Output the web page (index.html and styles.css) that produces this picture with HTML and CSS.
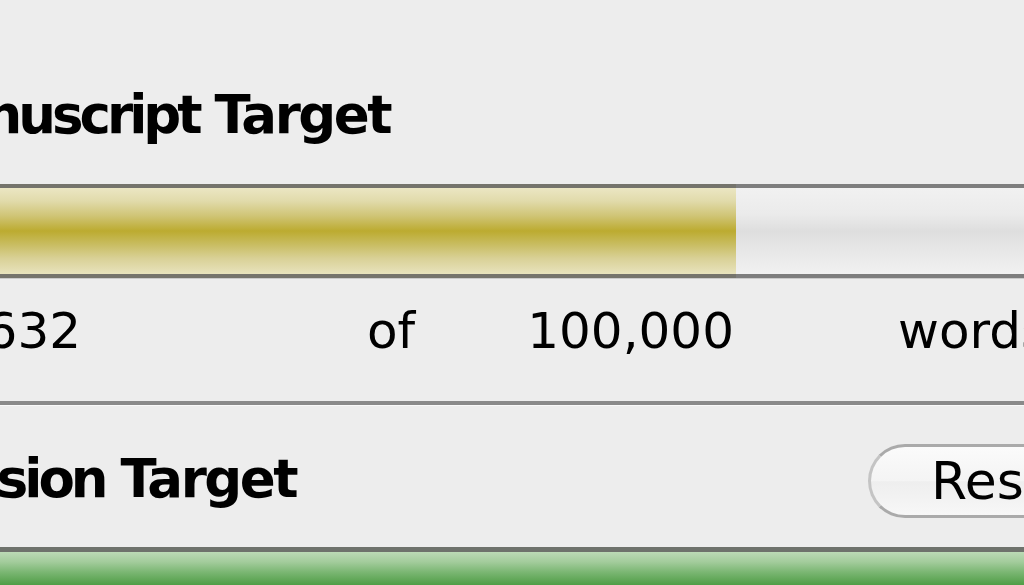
FILE: index.html
```html
<!DOCTYPE html>
<html lang="en">
<head>
  <meta charset="UTF-8">
  <title>Project Targets</title>
  <link rel="stylesheet" href="styles.css">
</head>
<body>
  <div class="panel">
    <div class="title-row">
      <div class="label label-manuscript"><span><span class="tight">Manuscript</span> Target</span></div>
    </div>

    <div class="bar">
      <div class="bar-fill" style="width: 736px"></div>
    </div>

    <div class="stats">
      <div class="stat-current"><span>45,632</span></div>
      <div class="stat-of">of</div>
      <div class="stat-target"><span>100,000</span></div>
      <div class="stat-unit">words</div>
    </div>

    <div class="separator"></div>

    <div class="session-row">
      <div class="label label-session"><span><span class="tight">Session</span> Target</span></div>
      <button class="reset-button">Reset</button>
    </div>

    <div class="bar bar-session">
      <div class="bar-fill-green"></div>
    </div>
  </div>
</body>
</html>
```

FILE: styles.css
```css
html, body {
  margin: 0;
  padding: 0;
}

body {
  background: #ededed;
  font-family: "DejaVu Sans", "Liberation Sans", sans-serif;
  color: #000;
  overflow: hidden;
}

.panel {
  width: 1024px;
  height: 585px;
  overflow: hidden;
}

.label {
  flex: none;
  display: flex;
  justify-content: flex-end;
  white-space: nowrap;
  font-weight: bold;
  font-size: 53px;
  line-height: 64px;
  letter-spacing: -2.5px;
}

.label .tight {
  letter-spacing: -4px;
}

.title-row {
  box-sizing: border-box;
  height: 184px;
  padding-top: 83px;
}

.label-manuscript {
  width: 390px;
}

.bar {
  position: relative;
  box-sizing: border-box;
  height: 94px;
  border-top: 4px solid #7e7e7e;
  border-bottom: 4px solid #7e7e7e;
  box-shadow: 0 1px 0 #cbcbcb;
  background: linear-gradient(#f1f1f1, #ebebeb 30%, #dedede 50%, #e8e8e8 75%, #f1f1f1);
}

.bar-fill {
  height: 86px;
  margin-top: -4px;
  border-top: 4px solid #75746c;
  border-bottom: 4px solid #75746c;
  background: linear-gradient(#ebe6c3, #e1dbab 15%, #d0c577 32%, #bcab30 50%, #c8bc5f 65%, #d9d197 82%, #e8e3bd);
}

.stats {
  box-sizing: border-box;
  height: 123px;
  padding-top: 23px;
  display: flex;
  font-size: 50px;
  line-height: 60px;
  white-space: nowrap;
}

.stats > div {
  flex: none;
}

.stat-current {
  width: 81px;
  display: flex;
  justify-content: flex-end;
}

.stat-of {
  margin-left: 286px;
  width: 48px;
}

.stat-target {
  width: 319px;
  display: flex;
  justify-content: flex-end;
}

.stat-unit {
  margin-left: 164px;
}

.separator {
  height: 4px;
  background: #8a8a8a;
  box-shadow: 0 1px 0 #f9f9f9;
}

.session-row {
  box-sizing: border-box;
  height: 142px;
  display: flex;
  align-items: flex-start;
}

.label-session {
  width: 296px;
  margin-top: 42px;
}

.reset-button {
  flex: none;
  margin-left: 572px;
  margin-top: 39px;
  height: 74px;
  width: 240px;
  padding: 0 0 0 60px;
  text-align: left;
  border: 3px solid #c4c4c4;
  border-top-color: #aaaaaa;
  border-bottom-color: #aaaaaa;
  border-radius: 37px;
  background: linear-gradient(#fbfbfb, #f4f4f4 50%, #eeeeee 51%, #f7f7f7);
  font-family: "DejaVu Sans", "Liberation Sans", sans-serif;
  font-size: 52px;
  color: #000;
}

.bar-session {
  height: 38px;
  border-top: 5px solid #6e726c;
  border-bottom: none;
  box-shadow: none;
  background: linear-gradient(#bcdab6, #a3cc9c 30%, #7cb774 60%, #4f9d46);
}

.bar-fill-green {
  height: 100%;
}
```
